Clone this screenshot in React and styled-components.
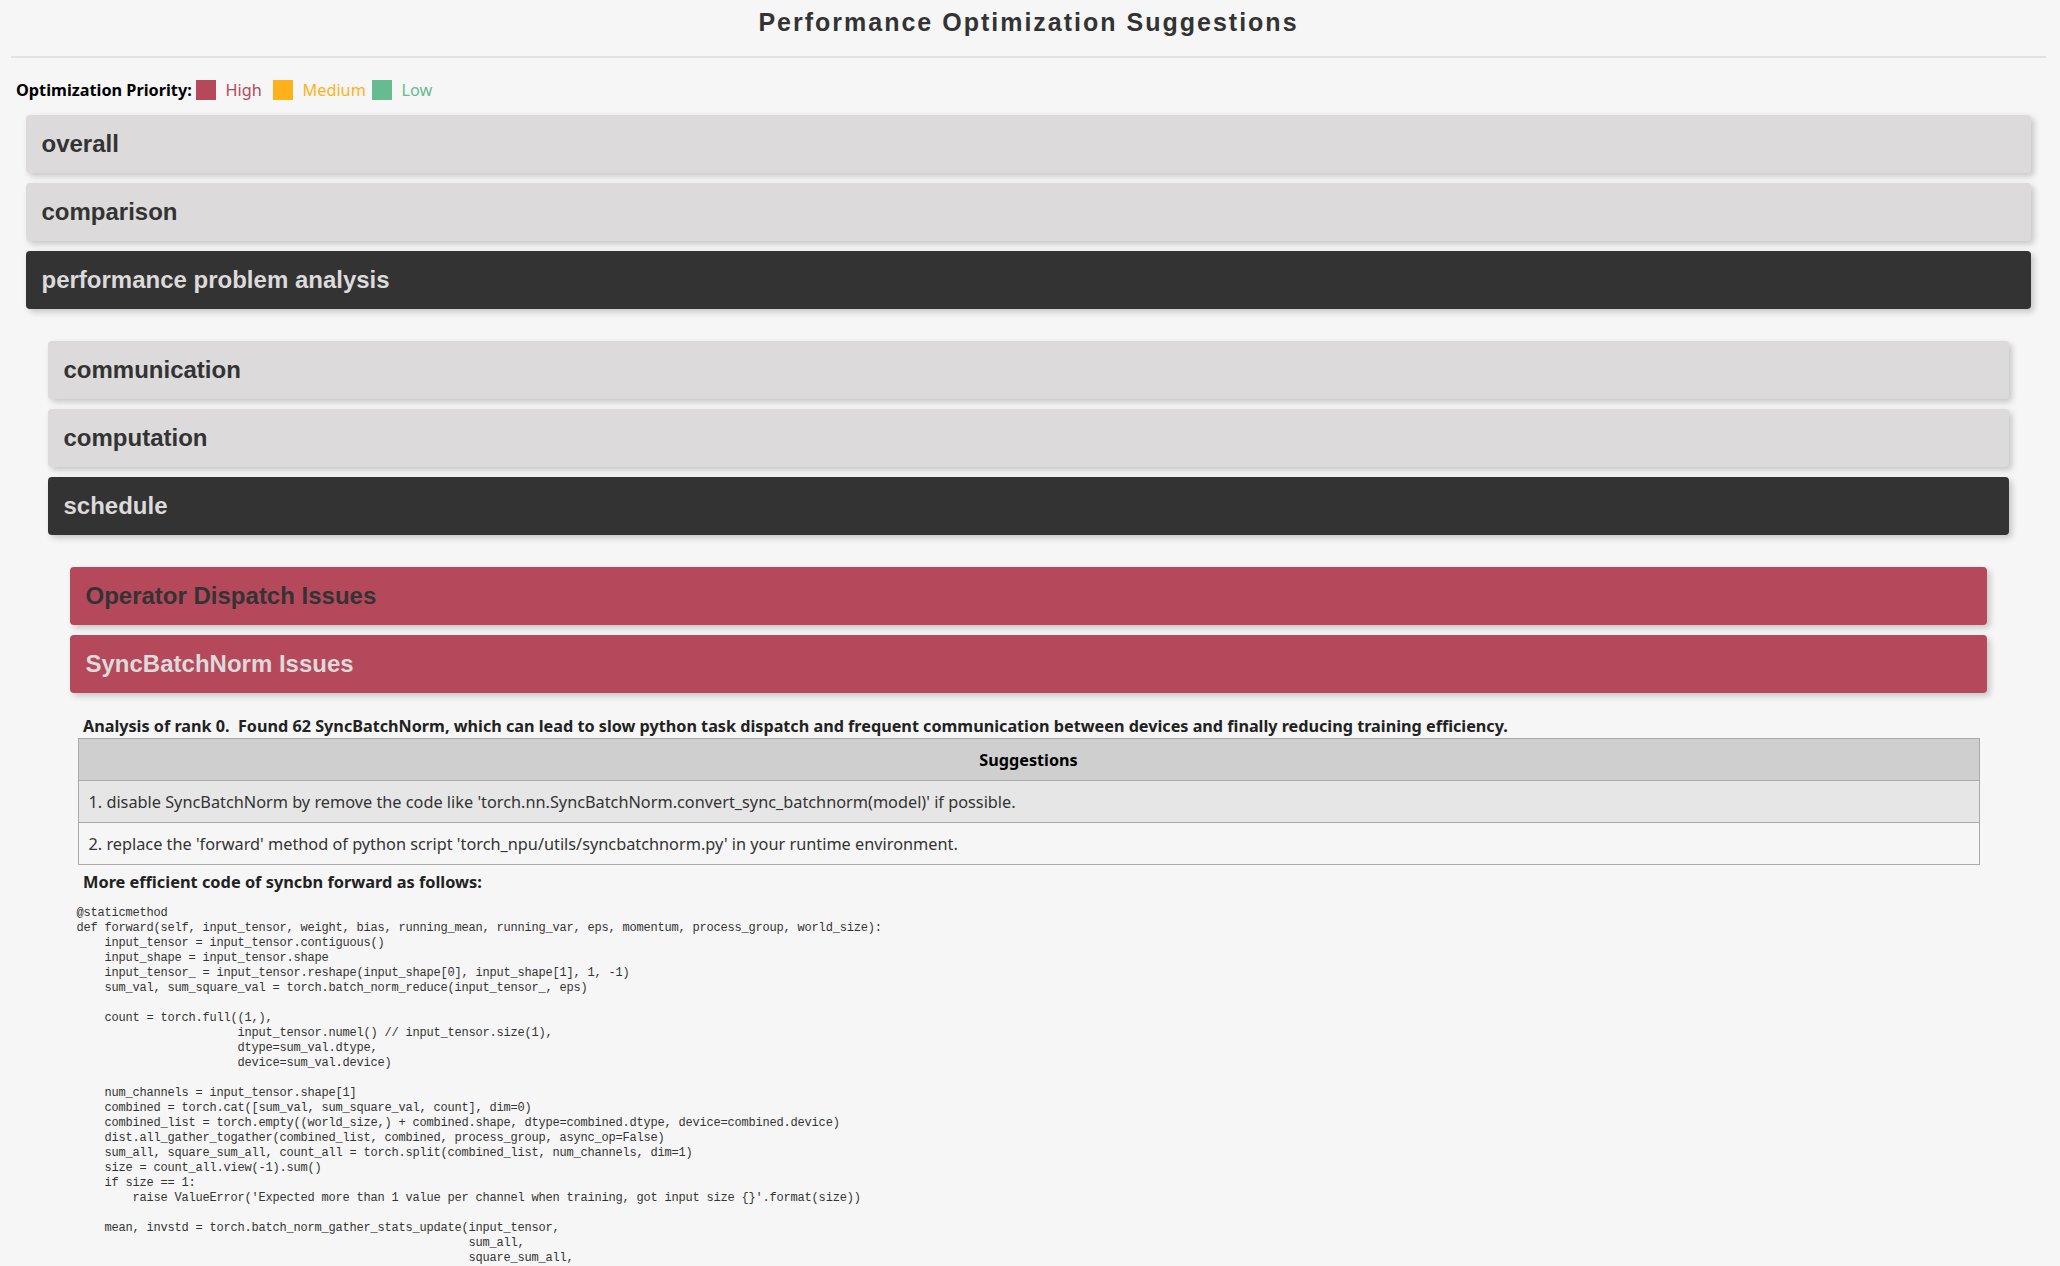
import styled, { createGlobalStyle } from 'styled-components'

const GlobalStyle = createGlobalStyle`
  html, body {
    margin: 0;
    background: #f6f6f6;
    font-family: "Noto Sans", "Open Sans", sans-serif;
  }
`

const Page = styled.div`
  width: 2035px;
  margin-left: 11px;
`

const Title = styled.h1`
  margin: 0;
  height: 58px;
  padding-top: 8px;
  box-sizing: border-box;
  border-bottom: 2px solid #e2e2e2;
  text-align: center;
  font: bold 25px/29px "Liberation Sans", Arial, sans-serif;
  letter-spacing: 2px;
  color: #333;
`

const Legend = styled.div`
  display: flex;
  align-items: center;
  height: 20px;
  margin: 22px 0 15px 5px;
  font-size: 16.25px;
`

const LegendLabel = styled.b`
  width: 174.5px;
  white-space: nowrap;
  color: #000;
  margin-right: 5px;
`

const Swatch = styled.span`
  width: 20px;
  height: 20px;
  background: ${(p) => p.$color};
`

const SwatchText = styled.span`
  width: ${(p) => p.$width}px;
  margin-left: 10px;
  color: ${(p) => p.$color};
`

const Panel = styled.div`
  padding: ${(p) => (p.$top ? '0 15px' : '22px 22px 0')};
`

const Toggle = styled.button`
  display: block;
  width: 100%;
  height: 58px;
  margin: 0 0 10px;
  padding: 0 15.5px;
  border: 0;
  border-radius: 4px;
  text-align: left;
  font: bold 24px "Liberation Sans", Arial, sans-serif;
  color: ${(p) => (p.$open ? '#dcdada' : '#333')};
  background: ${(p) => (p.$red ? '#b5495b' : p.$open ? '#333' : '#dcdada')};
  box-shadow: 3px 3px 6px rgba(0, 0, 0, 0.2);
`

const Detail = styled.div`
  padding: 11px 7.5px 0;
`

const Note = styled.p`
  margin: ${(p) => (p.$after ? '5px' : '0')} 0 0 5.5px;
  font-size: ${(p) => (p.$after ? '16.35px' : '16.2px')};
  line-height: 24px;
  font-weight: bold;
  color: #222;
`

const Table = styled.table`
  width: 100%;
  border-collapse: collapse;
  font-size: 16.3px;
  color: #333;
`

const HeadCell = styled.th`
  box-sizing: border-box;
  height: 42px;
  padding: 0;
  border: 1px solid #aaa;
  background: #cfcfcf;
  font-size: 16.2px;
  color: #000;
`

const Cell = styled.td`
  box-sizing: border-box;
  height: 42px;
  padding: 0 10px;
  border: 1px solid #aaa;
  background: ${(p) => (p.$shade ? '#e6e6e6' : 'transparent')};
`

const Code = styled.pre`
  margin: 12px 0 0 -1px;
  font: 12px/15px "Liberation Mono", monospace;
  letter-spacing: -0.2px;
  color: #333;
`

const code = `@staticmethod
def forward(self, input_tensor, weight, bias, running_mean, running_var, eps, momentum, process_group, world_size):
    input_tensor = input_tensor.contiguous()
    input_shape = input_tensor.shape
    input_tensor_ = input_tensor.reshape(input_shape[0], input_shape[1], 1, -1)
    sum_val, sum_square_val = torch.batch_norm_reduce(input_tensor_, eps)

    count = torch.full((1,),
                       input_tensor.numel() // input_tensor.size(1),
                       dtype=sum_val.dtype,
                       device=sum_val.device)

    num_channels = input_tensor.shape[1]
    combined = torch.cat([sum_val, sum_square_val, count], dim=0)
    combined_list = torch.empty((world_size,) + combined.shape, dtype=combined.dtype, device=combined.device)
    dist.all_gather_togather(combined_list, combined, process_group, async_op=False)
    sum_all, square_sum_all, count_all = torch.split(combined_list, num_channels, dim=1)
    size = count_all.view(-1).sum()
    if size == 1:
        raise ValueError('Expected more than 1 value per channel when training, got input size {}'.format(size))

    mean, invstd = torch.batch_norm_gather_stats_update(input_tensor,
                                                        sum_all,
                                                        square_sum_all,`

export default function App() {
  return (
    <>
      <GlobalStyle />
      <Page>
        <Title>Performance Optimization Suggestions</Title>
        <Legend>
          <LegendLabel>Optimization Priority:</LegendLabel>
          <Swatch $color="#b5495b" />
          <SwatchText $color="#b5495b" $width={47}>High</SwatchText>
          <Swatch $color="#ffb11b" />
          <SwatchText $color="#ffb11b" $width={69}>Medium</SwatchText>
          <Swatch $color="#66bb91" />
          <SwatchText $color="#66bb91" $width={40}>Low</SwatchText>
        </Legend>
        <Panel $top>
          <Toggle>overall</Toggle>
          <Toggle>comparison</Toggle>
          <Toggle $open>performance problem analysis</Toggle>
          <Panel>
            <Toggle>communication</Toggle>
            <Toggle>computation</Toggle>
            <Toggle $open>schedule</Toggle>
            <Panel>
              <Toggle $red>Operator Dispatch Issues</Toggle>
              <Toggle $red $open>SyncBatchNorm Issues</Toggle>
              <Detail>
                <Note>Analysis of rank 0.&nbsp; Found 62 SyncBatchNorm, which can lead to slow python task dispatch and frequent communication between devices and finally reducing training efficiency.</Note>
                <Table>
                  <thead>
                    <tr><HeadCell>Suggestions</HeadCell></tr>
                  </thead>
                  <tbody>
                    <tr><Cell $shade>1. disable SyncBatchNorm by remove the code like 'torch.nn.SyncBatchNorm.convert_sync_batchnorm(model)' if possible.</Cell></tr>
                    <tr><Cell>2. replace the 'forward' method of python script 'torch_npu/utils/syncbatchnorm.py' in your runtime environment.</Cell></tr>
                  </tbody>
                </Table>
                <Note $after>More efficient code of syncbn forward as follows:</Note>
                <Code>{code}</Code>
              </Detail>
            </Panel>
          </Panel>
        </Panel>
      </Page>
    </>
  )
}
